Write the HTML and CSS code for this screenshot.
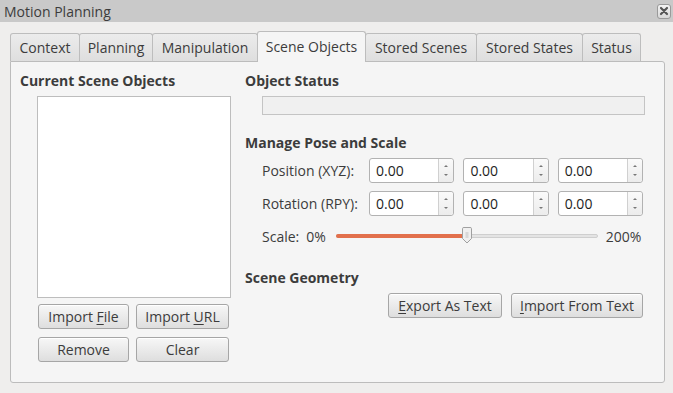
FILE: index.html
```html
<!DOCTYPE html>
<html lang="en">
<head>
  <meta charset="UTF-8" />
  <title>Motion Planning</title>
  <link rel="stylesheet" href="styles.css">
</head>
<body>
  <!-- TITLE BAR -->
  <div class="titlebar">
    <span class="title">Motion Planning</span>
    <span class="close-btn">
      <svg width="10" height="10" viewBox="0 0 10 10"><path d="M2 2 L8 8 M8 2 L2 8" stroke="#555" stroke-width="2.2" stroke-linecap="round"/></svg>
    </span>
  </div>

  <div class="window">
    <!-- TABS -->
    <div class="tabs">
      <div class="tab">Context</div>
      <div class="tab">Planning</div>
      <div class="tab">Manipulation</div>
      <div class="tab active">Scene Objects</div>
      <div class="tab">Stored Scenes</div>
      <div class="tab">Stored States</div>
      <div class="tab">Status</div>
    </div>

    <!-- PANE -->
    <div class="pane">
      <div class="left-col">
        <div class="heading">Current Scene Objects</div>
        <div class="object-list"></div>
        <div class="btn-grid">
          <button class="btn">Import <u>F</u>ile</button>
          <button class="btn">Import <u>U</u>RL</button>
          <button class="btn">Remove</button>
          <button class="btn">Clear</button>
        </div>
      </div>

      <div class="right-col">
        <div class="heading">Object Status</div>
        <div class="status-box"></div>

        <div class="heading heading-pose">Manage Pose and Scale</div>
        <div class="pose-row">
          <span class="pose-label">Position (XYZ):</span>
          <div class="spin"><span class="spin-val">0.00</span><span class="spin-arrows"><i class="up"></i><i class="down"></i></span></div>
          <div class="spin"><span class="spin-val">0.00</span><span class="spin-arrows"><i class="up"></i><i class="down"></i></span></div>
          <div class="spin"><span class="spin-val">0.00</span><span class="spin-arrows"><i class="up"></i><i class="down"></i></span></div>
        </div>
        <div class="pose-row">
          <span class="pose-label">Rotation (RPY):</span>
          <div class="spin"><span class="spin-val">0.00</span><span class="spin-arrows"><i class="up"></i><i class="down"></i></span></div>
          <div class="spin"><span class="spin-val">0.00</span><span class="spin-arrows"><i class="up"></i><i class="down"></i></span></div>
          <div class="spin"><span class="spin-val">0.00</span><span class="spin-arrows"><i class="up"></i><i class="down"></i></span></div>
        </div>
        <div class="scale-row">
          <span class="scale-label">Scale:</span>
          <span>0%</span>
          <div class="slider">
            <div class="slider-fill"></div>
            <div class="slider-handle">
              <svg width="12" height="17" viewBox="0 0 12 17"><path d="M1.5 1.5 Q1.5 0.5 3 0.5 L9 0.5 Q10.5 0.5 10.5 1.5 L10.5 11.5 L6 16 L1.5 11.5 Z" fill="#f0f0f0" stroke="#a0a0a0"/><path d="M4.5 6 H7.5 M4.5 8 H7.5 M4.5 10 H7.5" stroke="#b4b4b4" stroke-width="0.8"/></svg>
            </div>
          </div>
          <span>200%</span>
        </div>

        <div class="heading heading-geom">Scene Geometry</div>
        <div class="geom-row">
          <button class="btn btn-export"><u>E</u>xport As Text</button>
          <button class="btn btn-import"><u>I</u>mport From Text</button>
        </div>
      </div>
    </div>
  </div>
</body>
</html>
```

FILE: styles.css
```css
* { margin: 0; padding: 0; box-sizing: border-box; }
html, body {
  width: 673px;
  height: 393px;
  font-family: 'Open Sans', 'Noto Sans', sans-serif;
  font-size: 14px;
  color: #3c3c3c;
  background-color: #efeeed;
  overflow: hidden;
}

.titlebar {
  height: 22px;
  background-color: #c9c9c9;
  display: flex;
  align-items: center;
  justify-content: space-between;
  padding: 0 2px 0 4px;
}

.title {
  font-size: 14px;
  color: #3c3c3c;
}

.close-btn {
  width: 14px;
  height: 15px;
  border: 1px solid #9a9a9a;
  border-radius: 3px;
  background: linear-gradient(#f4f4f4, #d8d8d8);
  display: flex;
  align-items: center;
  justify-content: center;
}

.window {
  padding: 9px 8px 10px 10px;
  display: flex;
  flex-direction: column;
  height: 371px;
}

/* TABS */
.tabs {
  display: flex;
  align-items: flex-end;
  height: 30px;
  position: relative;
  z-index: 1;
}

.tab {
  height: 28px;
  border: 1px solid #bdbdbd;
  border-bottom: none;
  border-radius: 3px 3px 0 0;
  background: linear-gradient(#ececec, #dedede);
  display: flex;
  align-items: center;
  justify-content: center;
  margin-right: -1px;
}

.tab:nth-child(1) { width: 70px; }
.tab:nth-child(2) { width: 74px; }
.tab:nth-child(3) { width: 106px; }
.tab:nth-child(4) { width: 109px; }
.tab:nth-child(5) { width: 112px; }
.tab:nth-child(6) { width: 107px; }
.tab:nth-child(7) { width: 59px; }

.tab.active {
  height: 31px;
  background: #f5f5f5;
  margin-bottom: -1px;
  padding-bottom: 2px;
}

.pane {
  flex: 1;
  border: 1px solid #bcbcbc;
  border-radius: 0 3px 3px 3px;
  background-color: #f5f5f5;
  display: flex;
  padding: 11px 19px 0 9px;
}

.heading {
  font-weight: bold;
  height: 16px;
  line-height: 16px;
}

/* LEFT */
.left-col {
  width: 225px;
  flex-shrink: 0;
  display: flex;
  flex-direction: column;
}

.object-list {
  margin: 7px 0 0 17px;
  width: 194px;
  height: 202px;
  background: #fff;
  border: 1px solid #bdbdbd;
}

.btn-grid {
  margin: 6px 0 0 18px;
  display: grid;
  grid-template-columns: 91px 93px;
  grid-auto-rows: 25px;
  column-gap: 7px;
  row-gap: 8px;
}

.btn {
  height: 25px;
  font-family: inherit;
  font-size: 14px;
  color: #3c3c3c;
  border: 1px solid #a6a6a6;
  border-radius: 3px;
  background: linear-gradient(#f7f7f7, #dedede);
  box-shadow: inset 0 1px 0 #fff;
}

.btn u {
  text-decoration-thickness: 1px;
  text-underline-offset: 2px;
}

/* RIGHT */
.right-col {
  flex: 1;
  min-width: 0;
  display: flex;
  flex-direction: column;
}

.status-box {
  margin: 7px 0 0 17px;
  height: 19px;
  border: 1px solid #c4c4c4;
  background: #f0f0f0;
}

.heading-pose {
  margin-top: 20px;
}

.pose-row {
  margin: 7px 2px 0 17px;
  display: flex;
  align-items: center;
  height: 25px;
}

.pose-row + .pose-row {
  margin-top: 8px;
}

.pose-label {
  width: 108px;
}

.spin {
  width: 86px;
  height: 25px;
  margin-right: 9px;
  background: #fff;
  border: 1px solid #b2b2b2;
  border-radius: 3px;
  display: flex;
}

.spin:last-child {
  margin-right: 0;
}

.spin-val {
  flex: 1;
  padding-left: 6px;
  line-height: 23px;
  color: #1e1e1e;
}

.spin-arrows {
  width: 15px;
  border-left: 1px solid #d0d0d0;
  background: linear-gradient(#fafafa, #ececec);
  border-radius: 0 3px 3px 0;
  display: flex;
  flex-direction: column;
  align-items: center;
  justify-content: center;
  gap: 7px;
}

.spin-arrows i {
  width: 0;
  height: 0;
  border-left: 2px solid transparent;
  border-right: 2px solid transparent;
}

.spin-arrows .up { border-bottom: 2px solid #777; }
.spin-arrows .down { border-top: 2px solid #777; }

.scale-row {
  margin: 8px 0 0 17px;
  display: flex;
  align-items: center;
  height: 24px;
}

.scale-label {
  margin-right: 7px;
}

.slider {
  position: relative;
  width: 262px;
  height: 4px;
  margin: 0 8px 0 10px;
  background: #e4e4e4;
  border: 1px solid #cfcfcf;
  border-radius: 2px;
}

.slider-fill {
  width: 131px;
  height: 4px;
  margin: -1px 0 0 -1px;
  background: #e2704c;
  border-radius: 2px;
}

.slider-handle {
  position: absolute;
  left: 124px;
  top: -8px;
}

.heading-geom {
  margin-top: 22px;
}

.geom-row {
  margin: 7px 2px 0 0;
  display: flex;
  justify-content: flex-end;
  gap: 9px;
}

.btn-export { width: 114px; }
.btn-import { width: 132px; }
```
